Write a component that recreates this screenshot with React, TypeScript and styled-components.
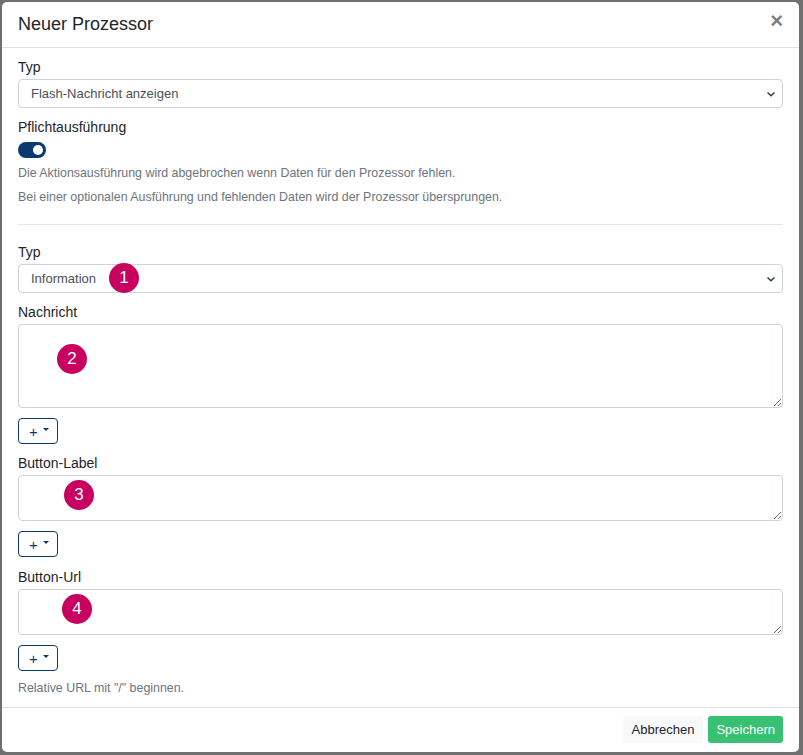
import styled, { createGlobalStyle } from 'styled-components';

const GlobalStyle = createGlobalStyle`
  html, body {
    margin: 0;
    padding: 0;
    background: #707070;
    font-family: "Liberation Sans", Arial, sans-serif;
    color: #212529;
  }
  * { box-sizing: border-box; }
`;

const Backdrop = styled.div`
  padding: 2px 4px 3px 2px;
  min-height: 755px;
`;

const Modal = styled.div`
  background: #fff;
  border-radius: 5px;
  overflow: hidden;
`;

const Header = styled.div`
  display: flex;
  align-items: center;
  justify-content: space-between;
  height: 46px;
  padding: 0 16px;
  border-bottom: 1px solid #dee2e6;
`;

const Title = styled.h5`
  margin: 0;
  font-size: 18px;
  font-weight: 400;
  line-height: 1.2;
`;

const Close = styled.button`
  border: 0;
  background: none;
  padding: 0;
  margin-top: -7px;
  font-family: "Liberation Sans", Arial, sans-serif;
  font-size: 22px;
  font-weight: 700;
  line-height: 1;
  color: #000;
  opacity: 0.5;
`;

const Body = styled.div`
  padding: 9px 16px 10px;
`;

const Group = styled.div<{ $gap?: number }>`
  margin-top: ${({ $gap }) => $gap ?? 0}px;
`;

const Label = styled.label`
  display: block;
  font-size: 14px;
  line-height: 21px;
  margin-bottom: 1px;
`;

const Field = styled.div`
  position: relative;
`;

const Select = styled.div`
  display: flex;
  align-items: center;
  justify-content: space-between;
  height: 29px;
  padding: 0 6px 0 12px;
  border: 1px solid #ced4da;
  border-radius: 4px;
  font-size: 13px;
  color: #495057;
`;

const Textarea = styled.textarea<{ $h: number }>`
  display: block;
  width: 100%;
  height: ${({ $h }) => $h}px;
  border: 1px solid #ced4da;
  border-radius: 4px;
  resize: vertical;
  font-family: inherit;
  font-size: 13px;
  padding: 6px 12px;
  margin: 0;
`;

const Badge = styled.span<{ $x: number; $y: number }>`
  position: absolute;
  left: ${({ $x }) => $x}px;
  top: ${({ $y }) => $y}px;
  width: 30px;
  height: 30px;
  border-radius: 50%;
  background: #c8005f;
  color: #fff;
  font-size: 17px;
  display: flex;
  align-items: center;
  justify-content: center;
  pointer-events: none;
`;

const Toggle = styled.span`
  display: block;
  position: relative;
  width: 28px;
  height: 16px;
  border-radius: 8px;
  background: #0b3a70;
  margin-top: 4px;

  &::after {
    content: '';
    position: absolute;
    right: 3px;
    top: 3px;
    width: 10px;
    height: 10px;
    border-radius: 50%;
    background: #fff;
  }
`;

const Help = styled.div<{ $gap: number }>`
  margin-top: ${({ $gap }) => $gap}px;
  font-size: 12.4px;
  line-height: 18px;
  color: #6c757d;
`;

const Rule = styled.hr`
  margin: 18px 0 17px;
  border: 0;
  border-top: 1px solid #e5e5e5;
`;

const InsertButton = styled.button`
  display: flex;
  align-items: center;
  gap: 5px;
  margin-top: 10px;
  width: 40px;
  height: 26px;
  padding: 0 0 0 10px;
  border: 1px solid #0b3a70;
  border-radius: 4px;
  background: #fff;
  color: #0b3a70;
  font-family: inherit;
  font-size: 15px;
  line-height: 1;
`;

const Caret = styled.span`
  width: 0;
  height: 0;
  border-left: 3px solid transparent;
  border-right: 3px solid transparent;
  border-top: 3px solid #0b3a70;
  margin-top: -3px;
`;

const Footer = styled.div`
  display: flex;
  justify-content: flex-end;
  gap: 5px;
  padding: 8px 16px 9px;
  border-top: 1px solid #dee2e6;
`;

const FooterButton = styled.button<{ $primary?: boolean }>`
  height: 27px;
  padding: 0 ${({ $primary }) => ($primary ? 8 : 9)}px;
  border: 0;
  border-radius: 3px;
  font-family: inherit;
  font-size: 13px;
  background: ${({ $primary }) => ($primary ? '#38c172' : '#f8f9fa')};
  color: ${({ $primary }) => ($primary ? '#fff' : '#212529')};
`;

function Chevron() {
  return (
    <svg width="10" height="10" viewBox="0 0 10 10">
      <polyline points="1.5,3.5 5,6.8 8.5,3.5" fill="none" stroke="#343a40" strokeWidth="1.5" />
    </svg>
  );
}

export default function App() {
  return (
    <>
      <GlobalStyle />
      <Backdrop>
        <Modal>
          <Header>
            <Title>Neuer Prozessor</Title>
            <Close>×</Close>
          </Header>
          <Body>
            <Group>
              <Label>Typ</Label>
              <Select>
                Flash-Nachricht anzeigen
                <Chevron />
              </Select>
            </Group>
            <Group $gap={9}>
              <Label>Pflichtausführung</Label>
              <Toggle />
              <Help $gap={6}>
                Die Aktionsausführung wird abgebrochen wenn Daten für den Prozessor fehlen.
              </Help>
              <Help $gap={6}>
                Bei einer optionalen Ausführung und fehlenden Daten wird der Prozessor übersprungen.
              </Help>
            </Group>
            <Rule />
            <Group>
              <Label>Typ</Label>
              <Field>
                <Select>
                  Information
                  <Chevron />
                </Select>
                <Badge $x={91} $y={-1}>1</Badge>
              </Field>
            </Group>
            <Group $gap={9}>
              <Label>Nachricht</Label>
              <Field>
                <Textarea $h={84} />
                <Badge $x={39} $y={20}>2</Badge>
              </Field>
              <InsertButton>
                +<Caret />
              </InsertButton>
            </Group>
            <Group $gap={9}>
              <Label>Button-Label</Label>
              <Field>
                <Textarea $h={46} />
                <Badge $x={46} $y={5}>3</Badge>
              </Field>
              <InsertButton>
                +<Caret />
              </InsertButton>
            </Group>
            <Group $gap={10}>
              <Label>Button-Url</Label>
              <Field>
                <Textarea $h={46} />
                <Badge $x={44} $y={5}>4</Badge>
              </Field>
              <InsertButton>
                +<Caret />
              </InsertButton>
              <Help $gap={8}>Relative URL mit "/" beginnen.</Help>
            </Group>
          </Body>
          <Footer>
            <FooterButton>Abbrechen</FooterButton>
            <FooterButton $primary>Speichern</FooterButton>
          </Footer>
        </Modal>
      </Backdrop>
    </>
  );
}
